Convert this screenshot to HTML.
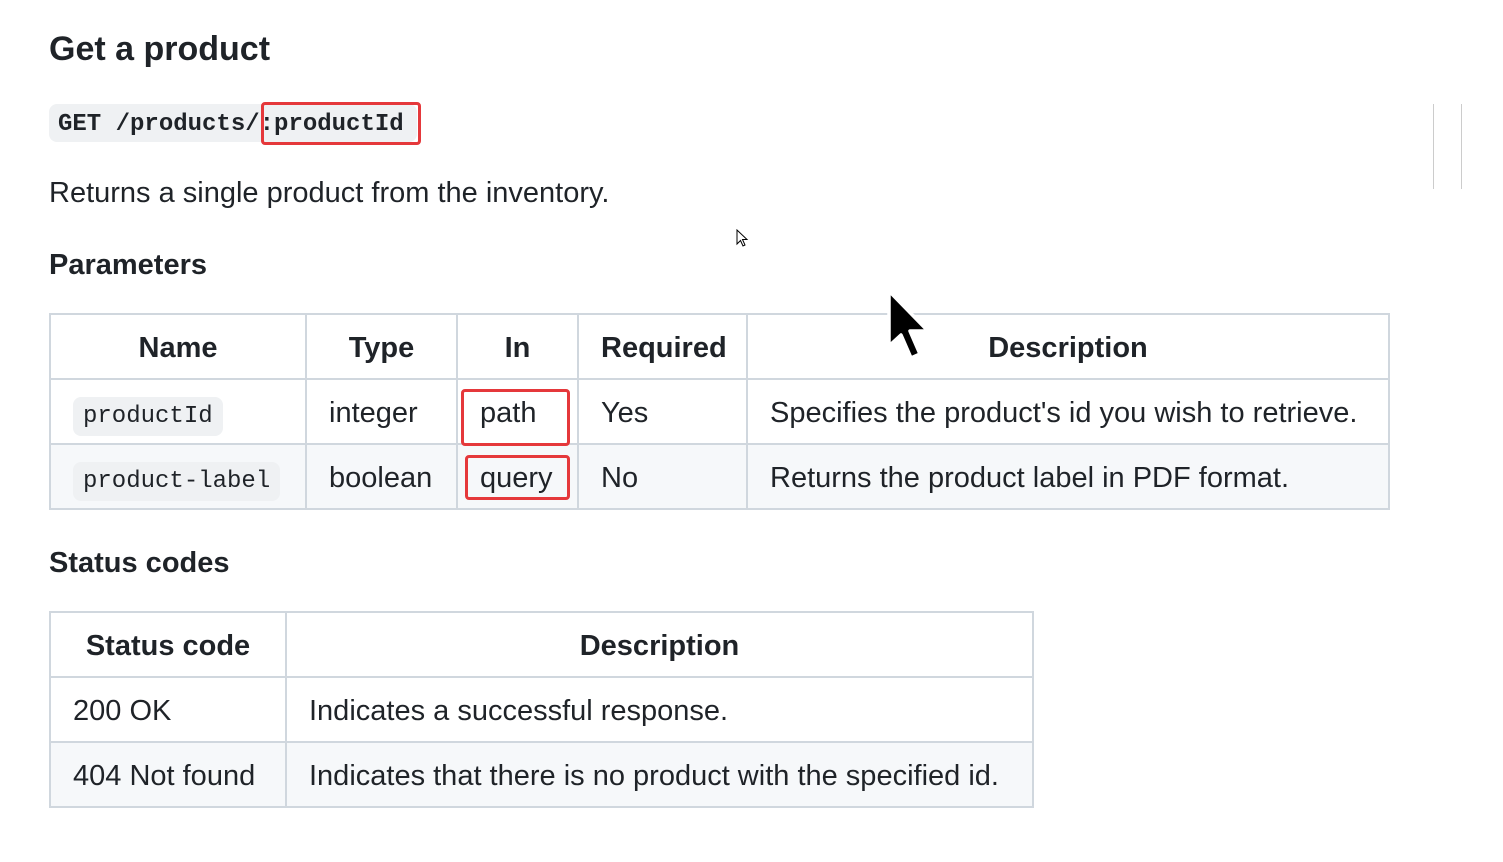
<!DOCTYPE html>
<html><head><meta charset="utf-8"><style>
body{margin:0;width:1503px;height:862px;background:#fff;position:relative;overflow:hidden;font-family:"Liberation Sans",sans-serif;color:#1f2328}
.a{position:absolute;white-space:nowrap}
table{position:absolute;border-collapse:collapse;font-size:29px;table-layout:fixed}
td,th{border:2px solid #d0d7de;padding:4px 22px 0;height:59px;white-space:nowrap;overflow:visible}
th{font-weight:bold;text-align:center}
.mono{font-family:"Liberation Mono",monospace}
code{font-family:"Liberation Mono",monospace;font-size:24px;background:#eff1f3;border-radius:8px;padding:6px 10px;white-space:nowrap}
.alt td{background:#f6f8fa}
.red{position:absolute;border:3px solid #e5383b;border-radius:4px}
</style></head><body>
<div class="a" style="left:49px;top:30px;font-size:34px;font-weight:bold">Get a product</div>
<div class="a mono" style="left:49px;top:104px;width:368px;height:38px;background:#eff1f3;border-radius:8px"></div>
<div class="a mono" style="left:58px;top:109px;font-size:24px;font-weight:bold;line-height:32px">GET /products/:productId</div>
<div class="red" style="left:261px;top:102px;width:154px;height:37px"></div>
<div class="a" style="left:49px;top:177px;font-size:29px">Returns a single product from the inventory.</div>
<div class="a" style="left:49px;top:249px;font-size:29px;font-weight:bold">Parameters</div>
<table style="left:49px;top:313px;width:1341px">
<colgroup><col style="width:256px"><col style="width:151px"><col style="width:121px"><col style="width:169px"><col></colgroup>
<tr><th>Name</th><th>Type</th><th>In</th><th style="text-align:left">Required</th><th>Description</th></tr>
<tr><td><code>productId</code></td><td>integer</td><td>path</td><td>Yes</td><td>Specifies the product's id you wish to retrieve.</td></tr>
<tr class="alt"><td><code>product-label</code></td><td>boolean</td><td>query</td><td>No</td><td>Returns the product label in PDF format.</td></tr>
</table>
<div class="red" style="left:461px;top:389px;width:103px;height:51px"></div>
<div class="red" style="left:465px;top:455px;width:99px;height:39px"></div>
<div class="a" style="left:49px;top:547px;font-size:29px;font-weight:bold">Status codes</div>
<table style="left:49px;top:611px;width:985px">
<colgroup><col style="width:236px"><col></colgroup>
<tr><th>Status code</th><th>Description</th></tr>
<tr><td>200 OK</td><td>Indicates a successful response.</td></tr>
<tr class="alt"><td>404 Not found</td><td>Indicates that there is no product with the specified id.</td></tr>
</table>
<div class="a" style="left:1433px;top:104px;width:1px;height:85px;background:#ccc"></div>
<div class="a" style="left:1461px;top:104px;width:1px;height:85px;background:#ccc"></div>
<svg class="a" style="left:736px;top:229px" width="14" height="20" viewBox="0 0 14 20"><path d="M1 1 L1 15 L4.5 11.5 L7 17 L9 16 L6.5 10.5 L11 10.5 Z" fill="#fff" stroke="#000" stroke-width="1"/></svg>
<svg class="a" style="left:884px;top:288px" width="52" height="80" viewBox="0 0 52 80"><path d="M5 3 L5 58 L17 47 L27 70 L36 66 L26 43 L44 43 Z" fill="#000" stroke="#fff" stroke-width="3.5" stroke-linejoin="round"/></svg>
</body></html>
